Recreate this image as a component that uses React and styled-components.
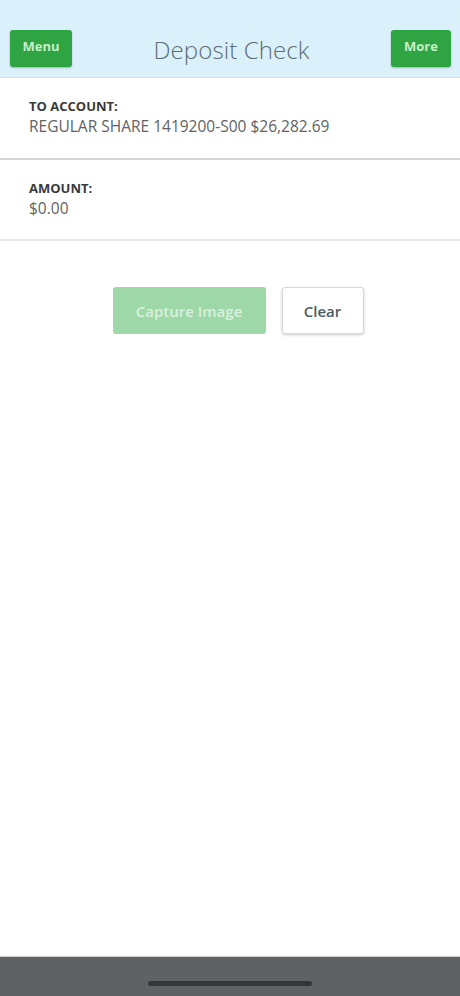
import styled, { createGlobalStyle } from "styled-components"

const GlobalStyle = createGlobalStyle`
  html, body {
    margin: 0;
    padding: 0;
    background: #ffffff;
    font-family: "Open Sans", "Noto Sans", sans-serif;
  }
`

const Page = styled.div`
  height: 996px;
  display: flex;
  flex-direction: column;
`
const Header = styled.div`
  height: 78px;
  box-sizing: border-box;
  padding: 30px 9px 0 10px;
  background: #daf0fb;
  display: flex;
  align-items: flex-start;
  justify-content: space-between;
  border-bottom: 1px solid #d6dde0;
`
const NavButton = styled.button`
  width: ${(props) => props.width}px;
  height: 37px;
  border: none;
  border-radius: 3px;
  background: #2ea443;
  color: #c9efc8;
  font-family: inherit;
  font-size: 13px;
  font-weight: 700;
  box-shadow: 0 1px 2px rgba(0, 0, 0, 0.25);
  padding: 0 0 6px;
`
const Title = styled.h1`
  margin: 0;
  padding-top: 3px;
  font-size: 24px;
  font-weight: 300;
  color: #5d6d75;
  letter-spacing: 0.1px;
`
const Section = styled.div`
  height: ${(props) => props.height}px;
  box-sizing: border-box;
  padding: 19px 29px 0;
  border-bottom: ${(props) => props.line};
`
const Label = styled.div`
  font-size: 13px;
  font-weight: 700;
  color: #3a3a3a;
  line-height: 18px;
`
const Value = styled.div`
  font-size: 15.5px;
  color: #626262;
  line-height: 22px;
`
const Actions = styled.div`
  display: flex;
  justify-content: center;
  gap: 16px;
  padding: 46px 0 0 16px;
  flex: 1;
`
const ActionButton = styled.button`
  height: 47px;
  width: ${(props) => props.width}px;
  border-radius: 3px;
  font-family: inherit;
  font-size: 15px;
  font-weight: 600;
  border: ${(props) => (props.primary ? "none" : "1px solid #d8d8d8")};
  background: ${(props) => (props.primary ? "#9ed7a8" : "#fff")};
  color: ${(props) => (props.primary ? "#d9f1dd" : "#4b5a60")};
  box-shadow: ${(props) => (props.primary ? "none" : "0 1px 3px rgba(0,0,0,0.2)")};
`
const BottomBar = styled.div`
  height: 40px;
  background: #5f6263;
  border-top: 1px solid #cfcfcf;
  display: flex;
  justify-content: center;
  padding-top: 24px;
  box-sizing: border-box;
`
const HomeIndicator = styled.div`
  width: 164px;
  height: 5px;
  border-radius: 3px;
  background: #333638;
`

const App = () => {
  return (
    <Page>
      <GlobalStyle />
      <Header>
        <NavButton width={62}>Menu</NavButton>
        <Title>Deposit Check</Title>
        <NavButton width={60}>More</NavButton>
      </Header>
      <Section height={82} line="2px solid #d4d4d4">
        <Label>TO ACCOUNT:</Label>
        <Value>REGULAR SHARE 1419200-S00 $26,282.69</Value>
      </Section>
      <Section height={81} line="2px solid #e8e8e8">
        <Label>AMOUNT:</Label>
        <Value>$0.00</Value>
      </Section>
      <Actions>
        <ActionButton primary width={153}>Capture Image</ActionButton>
        <ActionButton width={82}>Clear</ActionButton>
      </Actions>
      <BottomBar>
        <HomeIndicator />
      </BottomBar>
    </Page>
  )
}

export default App
